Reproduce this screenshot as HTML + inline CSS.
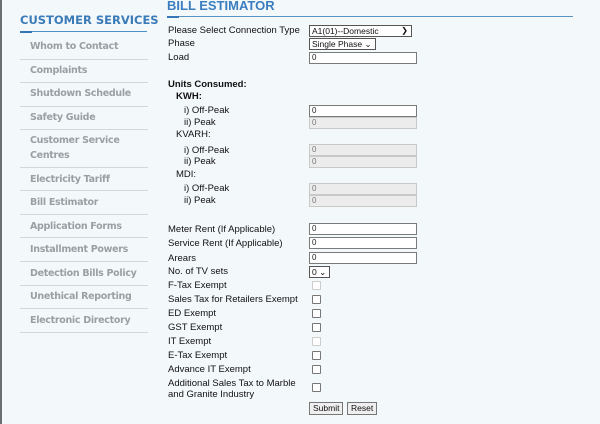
<!DOCTYPE html>
<html><head><style>
body{margin:0;width:600px;height:424px;background:#f3f8fb;position:relative;overflow:hidden;font-family:"Liberation Sans",Arial,sans-serif}
.lb{position:absolute;left:0;top:0;width:2px;height:424px;background:#6b6f73}
.t{position:absolute;font-size:9.5px;color:#111;white-space:nowrap;line-height:11px}
.s{position:absolute;left:30px;font-size:9.5px;color:#9a9fa4;font-weight:bold;font-family:"DejaVu Sans",sans-serif;letter-spacing:-0.3px;line-height:15px}
.ln{position:absolute;left:20px;width:128px;height:1px;background:#d3d7da}
.in{position:absolute;left:309px;width:104px;height:10px;border:1px solid #7a7a7a;background:#fff;font-size:8px;line-height:10px;padding-left:2px;box-sizing:content-box;color:#222}
.in.d{background:#ececec;border-color:#c8c8c8;color:#777}
.cb{position:absolute;left:312px;width:7px;height:7px;border:1px solid #777;border-radius:1px;background:#fff}
.cb.d{border-color:#ccc}
.sel{position:absolute;left:309px;height:10px;border:1px solid #555;background:#fff;font-size:8.5px;line-height:10px;padding-left:2px;color:#111}
.btn{position:absolute;top:402px;height:11px;border:1px solid #777;background:#efefef;font-size:8.5px;line-height:11px;padding:0 3px;color:#111}
</style></head><body>
<div class="lb"></div>
<div style="position:absolute;left:20px;top:13px;font-size:11.5px;font-weight:bold;color:#3b7bb8;font-family:'DejaVu Sans',sans-serif;letter-spacing:0px">CUSTOMER SERVICES</div>
<div style="position:absolute;left:20px;top:31px;width:127px;height:1px;background:#4d8fc7"></div>
<div style="position:absolute;left:20px;top:31px;width:12px;height:2px;background:#3577b6"></div>
<div style="position:absolute;left:167px;top:-2px;font-size:13px;font-weight:bold;color:#3a7ec0">BILL ESTIMATOR</div>
<div style="position:absolute;left:167px;top:16px;width:406px;height:1px;background:#5a94c0"></div>
<div style="position:absolute;left:167px;top:16px;width:12px;height:2px;background:#3577b6"></div>

<div class="s" style="top:39px">Whom to Contact</div><div class="ln" style="top:59px"></div>
<div class="s" style="top:63px">Complaints</div><div class="ln" style="top:82px"></div>
<div class="s" style="top:86px">Shutdown Schedule</div><div class="ln" style="top:106px"></div>
<div class="s" style="top:110px">Safety Guide</div><div class="ln" style="top:129px"></div>
<div class="s" style="top:133px">Customer Service<br>Centres</div><div class="ln" style="top:167px"></div>
<div class="s" style="top:172px">Electricity Tariff</div><div class="ln" style="top:190px"></div>
<div class="s" style="top:195px">Bill Estimator</div><div class="ln" style="top:214px"></div>
<div class="s" style="top:219px">Application Forms</div><div class="ln" style="top:237px"></div>
<div class="s" style="top:242px">Installment Powers</div><div class="ln" style="top:261px"></div>
<div class="s" style="top:266px">Detection Bills Policy</div><div class="ln" style="top:285px"></div>
<div class="s" style="top:289px">Unethical Reporting</div><div class="ln" style="top:308px"></div>
<div class="s" style="top:313px">Electronic Directory</div><div class="ln" style="top:332px"></div>

<div class="t" style="left:168px;top:25px">Please Select Connection Type</div>
<div class="sel" style="top:25px;width:99px">A1(01)--Domestic<span style="position:absolute;right:3px;font-size:8px">❯</span></div>
<div class="t" style="left:168px;top:38px">Phase</div>
<div class="sel" style="top:38px;width:63px">Single Phase ⌄</div>
<div class="t" style="left:168px;top:52px">Load</div>
<div class="in" style="top:52px">0</div>

<div class="t" style="left:168px;top:79px;font-weight:bold">Units Consumed:</div>
<div class="t" style="left:176px;top:91px;font-weight:bold">KWH:</div>
<div class="t" style="left:184px;top:105px">i) Off-Peak</div><div class="in" style="top:105px">0</div>
<div class="t" style="left:184px;top:117px">ii) Peak</div><div class="in d" style="top:117px">0</div>
<div class="t" style="left:176px;top:129px">KVARH:</div>
<div class="t" style="left:184px;top:145px">i) Off-Peak</div><div class="in d" style="top:144px">0</div>
<div class="t" style="left:184px;top:156px">ii) Peak</div><div class="in d" style="top:156px">0</div>
<div class="t" style="left:176px;top:169px">MDI:</div>
<div class="t" style="left:184px;top:183px">i) Off-Peak</div><div class="in d" style="top:183px">0</div>
<div class="t" style="left:184px;top:195px">ii) Peak</div><div class="in d" style="top:195px">0</div>

<div class="t" style="left:168px;top:224px">Meter Rent (If Applicable)</div><div class="in" style="top:223px">0</div>
<div class="t" style="left:168px;top:238px">Service Rent (If Applicable)</div><div class="in" style="top:237px">0</div>
<div class="t" style="left:168px;top:253px">Arears</div><div class="in" style="top:252px">0</div>
<div class="t" style="left:168px;top:266px">No. of TV sets</div>
<div class="sel" style="top:266px;width:17px">0 ⌄</div>

<div class="t" style="left:168px;top:280px">F-Tax Exempt</div><div class="cb d" style="top:281px"></div>
<div class="t" style="left:168px;top:294px">Sales Tax for Retailers Exempt</div><div class="cb" style="top:295px"></div>
<div class="t" style="left:168px;top:308px">ED Exempt</div><div class="cb" style="top:309px"></div>
<div class="t" style="left:168px;top:322px">GST Exempt</div><div class="cb" style="top:323px"></div>
<div class="t" style="left:168px;top:336px">IT Exempt</div><div class="cb d" style="top:337px"></div>
<div class="t" style="left:168px;top:350px">E-Tax Exempt</div><div class="cb" style="top:351px"></div>
<div class="t" style="left:168px;top:364px">Advance IT Exempt</div><div class="cb" style="top:365px"></div>
<div class="t" style="left:168px;top:378px">Additional Sales Tax to Marble<br>and Granite Industry</div><div class="cb" style="top:383px"></div>

<div class="btn" style="left:309px">Submit</div>
<div class="btn" style="left:347px">Reset</div>
</body></html>
